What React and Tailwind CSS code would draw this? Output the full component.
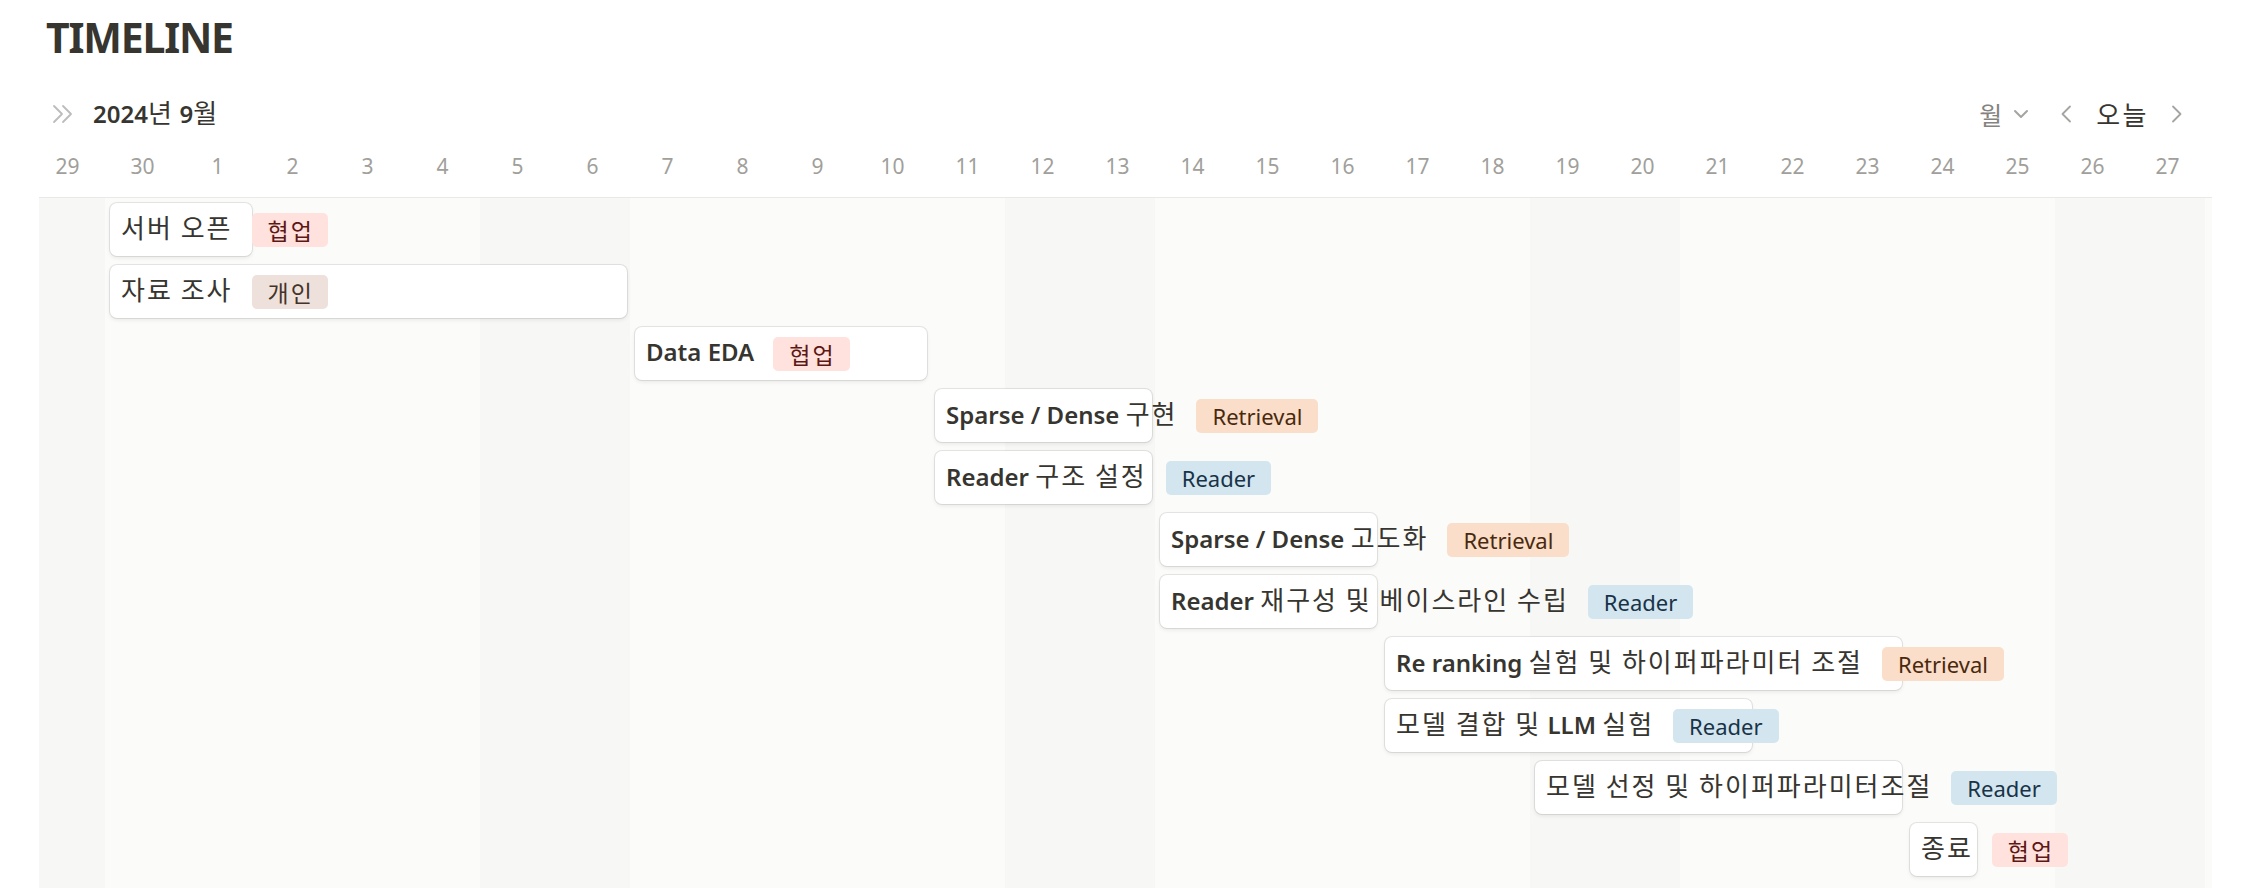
import React from "react";

const LABELS = ["29", "30", ...Array.from({ length: 27 }, (_, i) => String(i + 1))];
const WEEKEND = new Set([0, 6, 7, 13, 14, 20, 21, 27, 28]);
const COLS = [
  "col-start-1", "col-start-2", "col-start-3", "col-start-4", "col-start-5", "col-start-6",
  "col-start-7", "col-start-8", "col-start-9", "col-start-10", "col-start-11", "col-start-12",
  "col-start-13", "col-start-14", "col-start-15", "col-start-16", "col-start-17", "col-start-18",
  "col-start-19", "col-start-20", "col-start-21", "col-start-22", "col-start-23", "col-start-24",
  "col-start-25", "col-start-26", "col-start-27", "col-start-28", "col-start-29",
];

const TAGS = {
  협업: "bg-[#ffe2dd] text-[#5d1715]",
  개인: "bg-[#eee0da] text-[#44332a]",
  Retrieval: "bg-[#fadec9] text-[#49290e]",
  Reader: "bg-[#d3e5ef] text-[#183347]",
};

const ITEMS = [
  { title: "서버 오픈", tag: "협업", cls: "row-start-2 col-start-2 col-span-2" },
  { title: "자료 조사", tag: "개인", cls: "row-start-3 col-start-2 col-span-7" },
  { title: "Data EDA", tag: "협업", cls: "row-start-4 col-start-9 col-span-4" },
  { title: "Sparse / Dense 구현", tag: "Retrieval", cls: "row-start-5 col-start-13 col-span-3" },
  { title: "Reader 구조 설정", tag: "Reader", cls: "row-start-6 col-start-13 col-span-3" },
  { title: "Sparse / Dense 고도화", tag: "Retrieval", cls: "row-start-7 col-start-16 col-span-3" },
  { title: "Reader 재구성 및 베이스라인 수립", tag: "Reader", cls: "row-start-8 col-start-16 col-span-3" },
  { title: "Re ranking 실험 및 하이퍼파라미터 조절", tag: "Retrieval", cls: "row-start-9 col-start-19 col-span-7" },
  { title: "모델 결합 및 LLM 실험", tag: "Reader", cls: "row-start-10 col-start-19 col-span-5" },
  { title: "모델 선정 및 하이퍼파라미터조절", tag: "Reader", cls: "row-start-11 col-start-21 col-span-5" },
  { title: "종료", tag: "협업", cls: "row-start-12 col-start-26 col-span-1" },
];

function Runs({ text, latin, hangul }) {
  const parts = text.split(/([\uAC00-\uD7A3]+(?:[ ]+[\uAC00-\uD7A3]+)*)/).filter(Boolean);
  return parts.map((p, i) =>
    /[\uAC00-\uD7A3]/.test(p) ? (
      <span key={i} className={hangul}>{p}</span>
    ) : (
      <span key={i} className={latin}>{p}</span>
    )
  );
}

function Tag({ name }) {
  return (
    <div className={`ml-[19px] shrink-0 h-[34px] px-[16px] rounded-[5px] flex items-center leading-[30px] ${TAGS[name]}`}>
      <Runs
        text={name}
        latin="text-[22px]"
        hangul="text-[23px] tracking-[2px] -mr-[2px] font-['Noto_Sans_CJK_KR',sans-serif]"
      />
    </div>
  );
}

function Card({ item }) {
  return (
    <div className={`${item.cls} self-start ml-[5px] mr-[3px] h-[53px] bg-white rounded-[7px] shadow-[0_0_0_1px_rgba(15,15,15,0.09),0_2px_4px_rgba(15,15,15,0.08)] flex items-center pl-[11px] whitespace-nowrap`}>
      <div className="shrink-0 text-[#37352f] leading-[34px]">
        <Runs
          text={item.title}
          latin="text-[24px] font-semibold"
          hangul="text-[26px] font-normal tracking-[2px] font-['Noto_Sans_CJK_KR',sans-serif]"
        />
      </div>
      <Tag name={item.tag} />
    </div>
  );
}

export default function App() {
  return (
    <div className="w-[2244px] h-[888px] bg-white overflow-hidden flex flex-col font-['Noto_Sans','Noto_Sans_CJK_KR',sans-serif] text-[#37352f]">
      {/* Title */}
      <div className="h-[74px] shrink-0 flex items-center pl-[46px]">
        <h1 className="text-[41px] font-bold leading-[52px] tracking-[-1.2px] text-[#37352f]">TIMELINE</h1>
      </div>

      {/* Month row */}
      <div className="h-[77px] shrink-0 flex items-center justify-between pt-[3px] pl-[52px] pr-[61px]">
        <div className="flex items-center gap-[19px]">
          <svg width="22" height="20" viewBox="0 0 22 20" fill="none" stroke="#bdbcb9" strokeWidth="1.8" strokeLinecap="round" strokeLinejoin="round">
            <path d="M2 2 L10 10 L2 18" />
            <path d="M11 2 L19 10 L11 18" />
          </svg>
          <div className="text-[#37352f] leading-[34px]">
            <Runs
              text="2024년 9월"
              latin="text-[24px] font-semibold"
              hangul="text-[26px] tracking-[1.5px] font-['Noto_Sans_CJK_KR',sans-serif]"
            />
          </div>
        </div>
        <div className="flex items-center">
          <span className="text-[25px] leading-[34px] text-[#85837f] font-['Noto_Sans_CJK_KR',sans-serif]">월</span>
          <svg className="ml-[11px]" width="16" height="10" viewBox="0 0 16 10" fill="none" stroke="#a5a4a0" strokeWidth="2" strokeLinecap="round" strokeLinejoin="round">
            <path d="M2 2 L8 8 L14 2" />
          </svg>
          <svg className="ml-[31px]" width="12" height="18" viewBox="0 0 12 18" fill="none" stroke="#a5a4a0" strokeWidth="1.8" strokeLinecap="round" strokeLinejoin="round">
            <path d="M10 1.5 L2.5 9 L10 16.5" />
          </svg>
          <span className="ml-[24px] text-[26px] tracking-[2.5px] leading-[34px] text-[#37352f] font-['Noto_Sans_CJK_KR',sans-serif]">오늘</span>
          <svg className="ml-[22px]" width="12" height="18" viewBox="0 0 12 18" fill="none" stroke="#a5a4a0" strokeWidth="1.8" strokeLinecap="round" strokeLinejoin="round">
            <path d="M2 1.5 L9.5 9 L2 16.5" />
          </svg>
        </div>
      </div>

      {/* Timeline */}
      <div className="ml-[39px] w-[2173px] flex-1 flex flex-col overflow-hidden">
        <div className="h-[46px] shrink-0 -ml-[9px] grid grid-cols-[repeat(29,75px)] items-start">
          {LABELS.map((l, i) => (
            <div key={i} className="h-[30px] flex items-center justify-center text-[21px] leading-[30px] text-[#a19f9b]">
              {l}
            </div>
          ))}
        </div>
        <div className="h-px shrink-0 bg-[#e9e9e7]" />
        <div className="flex-1 bg-[#fbfbfa]">
          <div className="-ml-[9px] h-full grid grid-cols-[repeat(29,75px)] grid-rows-[5px_repeat(11,62px)_1fr]">
            {LABELS.map((_, i) => (
              <div key={i} className={`row-[1/-1] ${COLS[i]} ${WEEKEND.has(i) ? "bg-[#f7f7f5]" : "bg-[#fbfbfa]"}`} />
            ))}
            {ITEMS.map((it, i) => (
              <Card key={i} item={it} />
            ))}
          </div>
        </div>
      </div>
    </div>
  );
}
